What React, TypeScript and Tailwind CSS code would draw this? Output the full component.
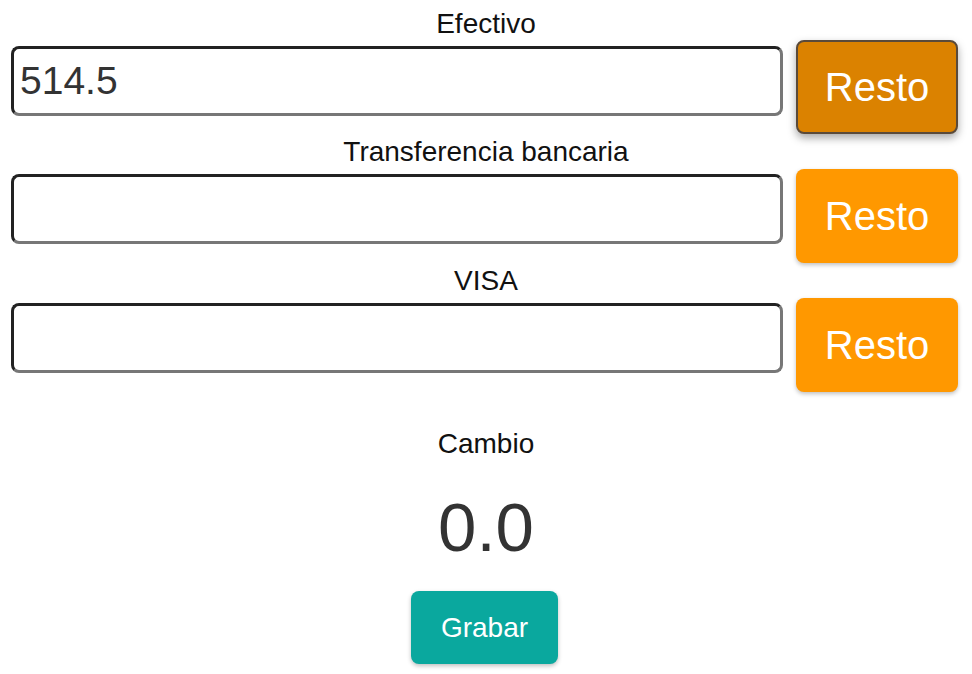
import { useState } from 'react';

type Method = { label: string; value: string };

function PaymentRow({ label, value, active }: { label: string; value: string; active?: boolean }) {
  return (
    <div className="mb-[2px]">
      <p className="h-[28px] pt-[2px] text-center text-[28px] leading-[28px] text-[#111]">{label}</p>
      <div className="mt-[5px] flex items-start">
        <input
          defaultValue={value}
          className="ml-[11px] mt-[5px] h-[70px] w-[772px] rounded-[8px] border-[3px] border-t-[#222] border-l-[#222] border-b-[#777] border-r-[#777] bg-white px-[6px] text-[39px] text-[#333] outline-none"
        />
        {active ? (
          <button className="ml-[13px] mt-[-1px] h-[94px] w-[162px] rounded-[8px] border-2 border-[#5a4a3a] bg-[#db8200] text-[40px] text-white shadow-[0_4px_8px_rgba(0,0,0,0.35)]">
            Resto
          </button>
        ) : (
          <button className="ml-[13px] h-[94px] w-[162px] rounded-[8px] bg-[#ff9800] text-[40px] text-white shadow-[0_2px_4px_rgba(0,0,0,0.25)]">
            Resto
          </button>
        )}
      </div>
    </div>
  );
}

export default function App() {
  const [methods] = useState<Method[]>([
    { label: 'Efectivo', value: '514.5' },
    { label: 'Transferencia bancaria', value: '' },
    { label: 'VISA', value: '' },
  ]);

  return (
    <div className="min-h-[674px] w-[972px] bg-white pt-[8px]" style={{ fontFamily: '"Liberation Sans", Arial, sans-serif' }}>
      {methods.map((m, i) => (
        <PaymentRow key={m.label} label={m.label} value={m.value} active={i === 0} />
      ))}
      <div className="flex flex-col items-center">
        <p className="mt-[36px] text-[28px] leading-[28px] text-[#111]">Cambio</p>
        <p className="mt-[30px] text-[69px] leading-[80px] text-[#333]">0.0</p>
        <button className="mr-[3px] mt-[23px] h-[73px] w-[147px] rounded-[8px] bg-[#0aa89e] text-[28px] text-white shadow-[0_2px_4px_rgba(0,0,0,0.25)]">
          Grabar
        </button>
      </div>
    </div>
  );
}
